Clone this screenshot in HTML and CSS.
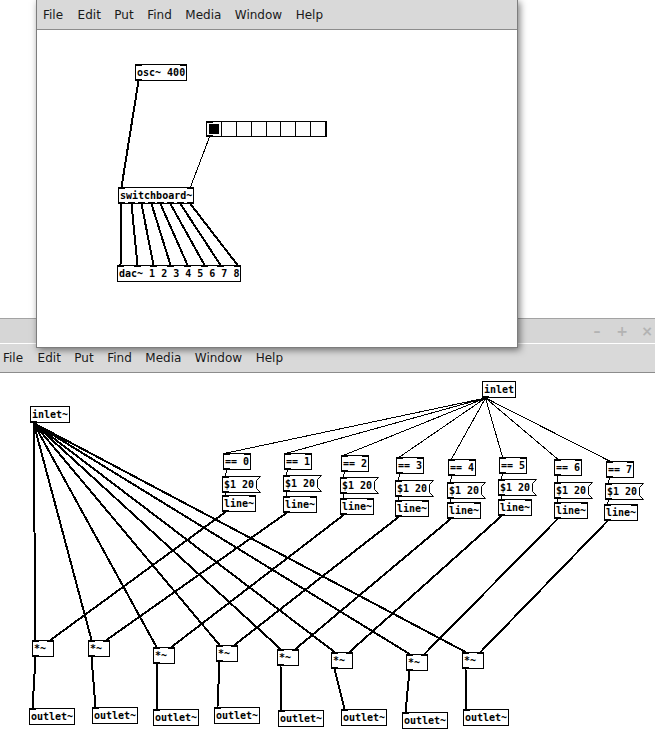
FILE: index.html
```html
<!DOCTYPE html>
<html lang="en">

<head>
    <meta charset="UTF-8">
    <meta name="viewport" content="width=device-width, initial-scale=1.0">
    <title>Pd - switchboard~</title>
    <link rel="stylesheet" href="styles.css">
</head>

<body>
    <div class="desktop">

        <!-- Patch window behind: switchboard~ abstraction -->
        <div class="window back">
            <div class="titlebar">
                <div class="controls">
                    <span>&ndash;</span>
                    <span>+</span>
                    <span>&times;</span>
                </div>
            </div>
            <div class="menubar">
                <span>File</span>
                <span>Edit</span>
                <span>Put</span>
                <span>Find</span>
                <span>Media</span>
                <span>Window</span>
                <span>Help</span>
            </div>
            <div class="canvas" id="patchBack"></div>
        </div>

        <!-- Patch window in front: test patch -->
        <div class="window front">
            <div class="menubar">
                <span>File</span>
                <span>Edit</span>
                <span>Put</span>
                <span>Find</span>
                <span>Media</span>
                <span>Window</span>
                <span>Help</span>
            </div>
            <div class="canvas" id="patchFront"></div>
        </div>

    </div>

    <script src="patch.js"></script>
</body>

</html>
```

FILE: styles.css
```css
body {
    margin: 0;
    background-color: #fff;
    font-family: "DejaVu Sans", sans-serif;
    overflow: hidden;
}

.desktop {
    position: relative;
    width: 655px;
    height: 752px;
    overflow: hidden;
}

/* Windows */
.window {
    position: absolute;
    display: flex;
    flex-direction: column;
    background-color: #fff;
}

.back {
    left: 0;
    right: 0;
    top: 318px;
    bottom: 0;
    border-top: 1px solid #a3a3a3;
}

.front {
    left: 36px;
    top: 0;
    width: 482px;
    height: 348px;
    box-sizing: border-box;
    border: 1px solid #7d7d7d;
    border-top: none;
    box-shadow: 2px 2px 7px rgba(0, 0, 0, 0.5);
    z-index: 1;
}

.titlebar {
    display: flex;
    justify-content: flex-end;
    align-items: center;
    height: 24px;
    background-color: #d6d6d6;
    border-bottom: 1px solid #fff;
    flex-shrink: 0;
}

.controls {
    display: flex;
    gap: 9px;
}

.controls span {
    width: 16px;
    text-align: center;
    font-size: 14px;
    font-weight: bold;
    color: #b3b3b3;
}

.menubar {
    display: flex;
    align-items: center;
    gap: 13.5px;
    height: 28px;
    padding-left: 3px;
    background-color: #d9d9d9;
    border-bottom: 1px solid #8c8c8c;
    font-size: 12px;
    color: #1a1a1a;
    flex-shrink: 0;
}

.menubar span:first-child {
    margin-right: 1px;
}

.front .menubar {
    height: 29px;
    padding-left: 6px;
}

/* Patch canvas */
.canvas {
    position: relative;
    flex: 1;
}

.wires {
    position: absolute;
    left: 0;
    top: 0;
    width: 100%;
    height: 100%;
    overflow: visible;
    shape-rendering: crispEdges;
}

.wires line {
    stroke: #000;
    stroke-width: 1;
}

.wires line.sig {
    stroke-width: 2;
}

/* Boxes */
.box {
    position: absolute;
    box-sizing: border-box;
    height: 17px;
    padding: 0 1px;
    border: 1px solid #000;
    font: bold 10px/15px "DejaVu Sans Mono", monospace;
    color: #000;
    white-space: pre;
}

.msg {
    border-right: none;
}

.flag {
    position: absolute;
    top: -1px;
    right: -5px;
    width: 5px;
    height: 17px;
    overflow: visible;
}

.flag polyline {
    fill: none;
    stroke: #000;
    stroke-width: 1;
}

.nub {
    position: absolute;
    width: 7px;
    height: 2px;
    background-color: #000;
}

.nub.in {
    top: -1px;
}

.nub.out {
    bottom: -1px;
}

/* hradio */
.radio {
    display: flex;
    height: 16px;
    padding: 0;
}

.cell {
    position: relative;
    box-sizing: border-box;
    width: 15px;
    height: 14px;
    border-right: 1px solid #000;
    background-color: #fcfcfc;
}

.cell:last-child {
    width: 14px;
    border-right: none;
}

.cell.on::after {
    content: "";
    position: absolute;
    left: 2px;
    top: 2px;
    width: 10px;
    height: 10px;
    background-color: #000;
}
```

FILE: patch.js
```javascript
// Draws both Pd patches: boxes, iolets and connections.
// Coordinates are relative to the white canvas of each window.
var BOX_H = 17;
var IOW = 7;
var SVG_NS = 'http://www.w3.org/2000/svg';

function textWidth(text) {
    return Math.max(text.length, 3) * 6 + 4;
}

// left edge of inlet/outlet n, like Pd spreads them over the box
function ioOnset(box, n, count) {
    if (count < 2) {
        return box.x;
    }
    return Math.round(box.x + (box.w - IOW) * n / (count - 1));
}

function addNubs(el, box, count, side) {
    for (var i = 0; i < count; i++) {
        var nub = document.createElement('span');
        nub.className = 'nub ' + side;
        nub.style.left = (ioOnset(box, i, count) - box.x - 1) + 'px';
        el.appendChild(nub);
    }
}

function makeBox(box) {
    var el = document.createElement('div');
    el.className = 'box ' + box.kind;
    el.style.left = box.x + 'px';
    el.style.top = box.y + 'px';

    if (box.kind === 'radio') {
        box.w = box.cells * 15 + 1;
        box.h = 16;
        for (var i = 0; i < box.cells; i++) {
            var cell = document.createElement('span');
            cell.className = i === box.value ? 'cell on' : 'cell';
            el.appendChild(cell);
        }
    } else {
        box.w = textWidth(box.text);
        box.h = BOX_H;
        el.textContent = box.text;

        if (box.kind === 'msg') {
            var flag = document.createElementNS(SVG_NS, 'svg');
            flag.setAttribute('class', 'flag');
            var shape = document.createElementNS(SVG_NS, 'polyline');
            shape.setAttribute('points', '0,0.5 4.5,0.5 0.5,4.5 0.5,12.5 4.5,16.5 0,16.5');
            flag.appendChild(shape);
            el.appendChild(flag);
        }
    }

    el.style.width = box.w + 'px';
    addNubs(el, box, box.ins, 'in');
    addNubs(el, box, box.outs, 'out');
    return el;
}

function drawPatch(id, boxes, wires) {
    var canvas = document.getElementById(id);
    var svg = document.createElementNS(SVG_NS, 'svg');
    svg.setAttribute('class', 'wires');
    canvas.appendChild(svg);

    boxes.forEach(function (box) {
        canvas.appendChild(makeBox(box));
    });

    // wire = [from box, outlet, to box, inlet, signal?]
    wires.forEach(function (w) {
        var from = boxes[w[0]];
        var to = boxes[w[2]];
        var line = document.createElementNS(SVG_NS, 'line');
        line.setAttribute('x1', ioOnset(from, w[1], from.outs) + 3.5);
        line.setAttribute('y1', from.y + from.h);
        line.setAttribute('x2', ioOnset(to, w[3], to.ins) + 3.5);
        line.setAttribute('y2', to.y);
        if (w[4]) {
            line.setAttribute('class', 'sig');
        }
        svg.appendChild(line);
    });
}

// Front window: the test patch
var front = [
    { kind: 'obj', x: 98, y: 34, text: 'osc~ 400', ins: 2, outs: 1 },
    { kind: 'radio', x: 169, y: 91, cells: 8, value: 0, ins: 1, outs: 1 },
    { kind: 'obj', x: 81, y: 157, text: 'switchboard~', ins: 2, outs: 8 },
    { kind: 'obj', x: 80, y: 235, text: 'dac~ 1 2 3 4 5 6 7 8', ins: 8, outs: 0 }
];
var frontWires = [[0, 0, 2, 0, true], [1, 0, 2, 1, false]];
for (var i = 0; i < 8; i++) {
    frontWires.push([2, i, 3, i, true]);
}

// Back window: inside switchboard~
var back = [
    { kind: 'obj', x: 30, y: 33, text: 'inlet~', ins: 0, outs: 1 },
    { kind: 'obj', x: 482, y: 8, text: 'inlet', ins: 0, outs: 1 }
];
var backWires = [];

// x, y of: == n, $1 20, line~, *~, outlet~
var columns = [
    [223, 80, 222, 103, 222, 122, 32, 267, 29, 335],
    [284, 80, 283, 102, 283, 123, 88, 267, 92, 334],
    [341, 82, 340, 104, 340, 125, 153, 274, 153, 336],
    [396, 84, 395, 107, 395, 127, 216, 272, 214, 334],
    [448, 86, 447, 109, 447, 129, 277, 276, 278, 337],
    [499, 84, 498, 106, 498, 126, 331, 279, 341, 336],
    [554, 86, 554, 109, 554, 129, 406, 281, 402, 339],
    [606, 88, 605, 110, 604, 131, 462, 279, 463, 336]
];

columns.forEach(function (c, n) {
    var base = back.length;
    back.push({ kind: 'obj', x: c[0], y: c[1], text: '== ' + n, ins: 2, outs: 1 });
    back.push({ kind: 'msg', x: c[2], y: c[3], text: '$1 20', ins: 1, outs: 1 });
    back.push({ kind: 'obj', x: c[4], y: c[5], text: 'line~', ins: 2, outs: 1 });
    back.push({ kind: 'obj', x: c[6], y: c[7], text: '*~', ins: 2, outs: 1 });
    back.push({ kind: 'obj', x: c[8], y: c[9], text: 'outlet~', ins: 1, outs: 0 });

    backWires.push([1, 0, base, 0, false]);
    backWires.push([base, 0, base + 1, 0, false]);
    backWires.push([base + 1, 0, base + 2, 0, false]);
    backWires.push([base + 2, 0, base + 3, 1, true]);
    backWires.push([0, 0, base + 3, 0, true]);
    backWires.push([base + 3, 0, base + 4, 0, true]);
});

drawPatch('patchFront', front, frontWires);
drawPatch('patchBack', back, backWires);
```
